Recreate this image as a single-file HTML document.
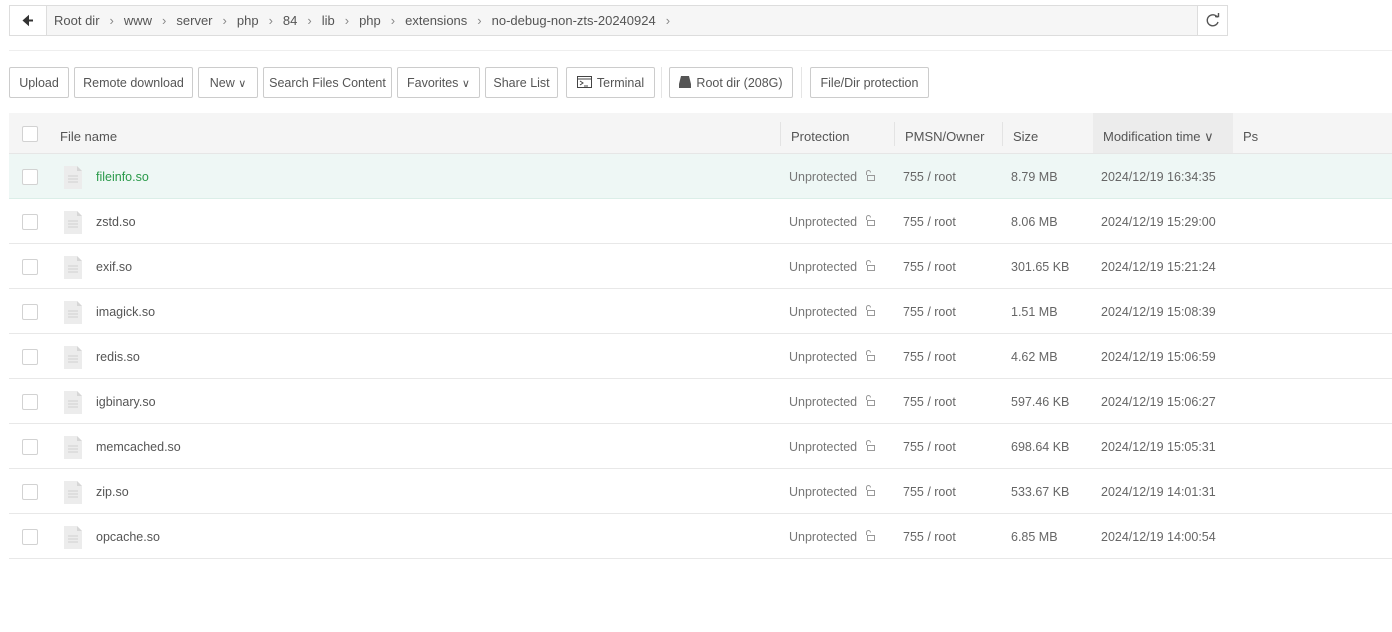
<!DOCTYPE html><html><head><meta charset="utf-8"><style>
*{box-sizing:border-box;margin:0;padding:0}
body{width:1392px;height:632px;background:#fff;font-family:"Liberation Sans",sans-serif;font-size:12.5px;color:#555;position:relative;overflow:hidden}
.abs{position:absolute}
.crumb{left:9px;top:5px;width:1219px;height:31px;border:1px solid #ddd;background:#f6f6f6}
.back{left:0;top:0;width:37px;height:29px;background:#fff;border-right:1px solid #ddd}
.path{left:44px;top:7px;color:#555;font-size:13px;white-space:nowrap}
.path i{font-style:normal;color:#888;margin:0 10px}
.ref{right:0;top:0;width:30px;height:29px;background:#fff;border-left:1px solid #ddd}
.hr{left:9px;top:50px;width:1383px;height:1px;background:#eee}
.btn{top:67px;height:31px;border:1px solid #ccc;border-radius:2px;background:#fff;color:#555;font-size:12.5px;line-height:30px;text-align:center;white-space:nowrap}
.sep{top:67px;width:1px;height:31px;background:#e5e5e5}
.head{left:9px;top:113px;width:1383px;height:41px;background:#f5f5f5;border-bottom:1px solid #e6e6e6}
.hc{top:16px;color:#555;font-size:13px}
.vl{top:9px;width:1px;height:24px;background:#e3e3e3}
.cb{width:16px;height:16px;border:1px solid #d2d2d2;background:#fff;border-radius:2px}
.row{left:9px;width:1383px;height:45px;border-bottom:1px solid #e8e8e8}
.row span{position:absolute;top:16px;font-size:12.5px;color:#666}
</style></head><body>
<div class="abs crumb">
 <div class="abs back"><svg width="37" height="29"><path d="M14 14.5h9M14 14.5l4-3.5v7z" stroke="#333" stroke-width="2" fill="#333"/></svg></div>
 <div class="abs path">Root dir<i>›</i>www<i>›</i>server<i>›</i>php<i>›</i>84<i>›</i>lib<i>›</i>php<i>›</i>extensions<i>›</i>no-debug-non-zts-20240924<i>›</i></div>
 <div class="abs ref"><svg width="30" height="29"><path d="M19.5 11.5A5.5 5.5 0 1 0 20 16" stroke="#555" stroke-width="1.4" fill="none"/><path d="M17 10.5h3.5v-3.5" stroke="#555" stroke-width="1.4" fill="none"/></svg></div>
</div>
<div class="abs hr"></div>
<div class="abs btn" style="left:9px;width:60px">Upload</div>
<div class="abs btn" style="left:74px;width:119px">Remote download</div>
<div class="abs btn" style="left:198px;width:60px">New <span style="font-size:11px">∨</span></div>
<div class="abs btn" style="left:263px;width:129px">Search Files Content</div>
<div class="abs btn" style="left:397px;width:83px">Favorites <span style="font-size:11px">∨</span></div>
<div class="abs btn" style="left:485px;width:73px">Share List</div>
<div class="abs btn" style="left:566px;width:89px"><svg width="15" height="12" style="vertical-align:-1px;margin-right:5px"><rect x=".5" y=".5" width="14" height="11" fill="none" stroke="#444"/><path d="M.5 3h14M3 5l3 2-3 2M7 10h4" stroke="#444" fill="none"/></svg>Terminal</div>
<div class="abs sep" style="left:661px"></div>
<div class="abs btn" style="left:669px;width:124px"><svg width="12" height="12" style="vertical-align:-1px;margin-right:5px"><path d="M2 0h8l2 8H0z" fill="#555"/><rect y="8" width="12" height="4" fill="#555"/></svg>Root dir (208G)</div>
<div class="abs sep" style="left:801px"></div>
<div class="abs btn" style="left:810px;width:119px">File/Dir protection</div>
<div class="abs head">
 <div class="abs cb" style="left:13px;top:13px"></div>
 <div class="abs hc" style="left:51px">File name</div>
 <div class="abs vl" style="left:771px"></div><div class="abs hc" style="left:782px">Protection</div>
 <div class="abs vl" style="left:885px"></div><div class="abs hc" style="left:896px">PMSN/Owner</div>
 <div class="abs vl" style="left:993px"></div><div class="abs hc" style="left:1004px">Size</div>
 <div class="abs" style="left:1084px;top:0;width:140px;height:40px;background:#ececec"></div>
 <div class="abs hc" style="left:1094px">Modification time <span style="font-size:13px">∨</span></div>
 <div class="abs hc" style="left:1234px">Ps</div>
</div>
<div id="rows"></div>
<script>
var d=[["fileinfo.so","8.79 MB","16:34:35"],["zstd.so","8.06 MB","15:29:00"],["exif.so","301.65 KB","15:21:24"],["imagick.so","1.51 MB","15:08:39"],["redis.so","4.62 MB","15:06:59"],["igbinary.so","597.46 KB","15:06:27"],["memcached.so","698.64 KB","15:05:31"],["zip.so","533.67 KB","14:01:31"],["opcache.so","6.85 MB","14:00:54"]];
var h="";d.forEach(function(r,i){var t=154+i*45;h+='<div class="abs row" style="top:'+t+'px;'+(i==0?'background:#eef7f5;border-bottom-color:#dbeee8':'')+'"><div class="abs cb" style="left:13px;top:15px"></div><svg class="abs" style="left:55px;top:12px" width="18" height="23"><path d="M0 0h13l5 5v18H0z" fill="#ececec"/><path d="M13 0v5h5" fill="#d6d6d6"/><path d="M4 10h10M4 13h10M4 16h10" stroke="#d0d0d0"/></svg><span style="left:87px;color:'+(i==0?'#2a9a4a':'#555')+'">'+r[0]+'</span><span style="left:780px;color:#777">Unprotected</span><svg class="abs" style="left:855px;top:16px" width="12" height="12"><path d="M2.5 5V2.5a2 2 0 0 1 4 0" stroke="#999" fill="none"/><rect x="3.5" y="5.5" width="7" height="5" stroke="#999" fill="none"/></svg><span style="left:894px">755 / root</span><span style="left:1002px">'+r[1]+'</span><span style="left:1092px">2024/12/19 '+r[2]+'</span></div>'});
document.getElementById("rows").innerHTML=h;
</script>
</body></html>
